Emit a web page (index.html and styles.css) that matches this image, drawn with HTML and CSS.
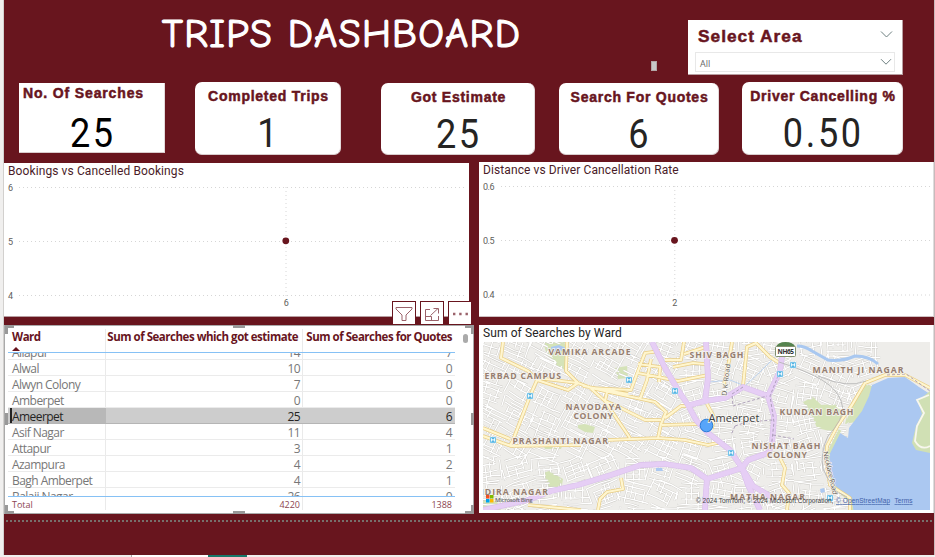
FILE: index.html
```html
<!DOCTYPE html>
<html lang="en">
<head>
<meta charset="utf-8">
<title>Trips Dashboard</title>
<link rel="stylesheet" href="styles.css">
</head>
<body>
<main class="canvas">
  <header class="top">
    <h1 class="title">TRIPS DASHBOARD</h1>
    <span class="handle-chip"></span>
    <section class="slicer">
      <div class="slicer-head"><span>Select Area</span>
        <svg width="13" height="9" viewBox="0 0 13 9"><path d="M1 1.5 L6.5 7 L12 1.5"/></svg></div>
      <div class="slicer-box"><span>All</span>
        <svg width="12" height="8" viewBox="0 0 12 8"><path d="M1 1.2 L6 6.2 L11 1.2"/></svg></div>
    </section>
  </header>

  <section class="kpis">
    <article class="kpi kpi-a"><h2>No. Of Searches</h2><p>25</p></article>
    <article class="kpi kpi-b"><h2>Completed Trips</h2><p>1</p></article>
    <article class="kpi kpi-c"><h2>Got Estimate</h2><p>25</p></article>
    <article class="kpi kpi-d"><h2>Search For Quotes</h2><p>6</p></article>
    <article class="kpi kpi-e"><h2>Driver Cancelling %</h2><p>0.50</p></article>
  </section>

  <section class="row charts">
    <article class="panel chart-left">
      <h3 class="t-book">Bookings vs Cancelled Bookings</h3>
      <svg class="plot" width="465" height="137" viewBox="4 179 465 137">
        <path class="grid" d="M19 187.5H464M19 241.5H464M19 295.5H464M286 187V296"/>
        <circle cx="285.8" cy="240.8" r="3.4"/>
        <text x="8" y="190.500">6</text><text x="8" y="244.500">5</text><text x="8" y="298.500">4</text>
        <text x="283.700" y="306.300">6</text>
      </svg>
    </article>
    <article class="panel chart-right">
      <h3 class="t-dist">Distance vs Driver Cancellation Rate</h3>
      <svg class="plot" width="454" height="138" viewBox="479 178 454 138">
        <path class="grid" d="M501 186.500H930M501 240.500H930M501 295H930M674.800 186V296"/>
        <circle cx="674.500" cy="240.300" r="3.4"/>
        <text x="483" y="189.500" textLength="11.500">0.6</text><text x="483" y="243.500" textLength="11.500">0.5</text><text x="483" y="298" textLength="11.500">0.4</text>
        <text x="672.200" y="306.300">2</text>
      </svg>
    </article>
  </section>

  <section class="row lower">
    <article class="panel table-panel">
      <div class="tools">
        <span><svg width="18" height="16" viewBox="0 0 18 16"><path d="M1 1.500H17V3L11 9V14.500H7V9L1 3Z"/></svg></span>
        <span><svg width="16" height="15" viewBox="0 0 16 15"><path d="M6 2.500H1.500V13.500H14.500V9M1.500 9.500H7.500V13.500M6.500 8.500L14 1.500M9.500 1.500H14.500V6.500"/></svg></span>
        <span><svg width="17" height="4" viewBox="0 0 17 4"><path class="dots" d="M1 .8h2.400v2.400H1zM7.200 .8h2.400v2.400H7.200zM13.500 .8h2.400v2.400h-2.400z"/></svg></span>
      </div>
      <i class="h tl"></i><i class="h tr"></i><i class="h bl"></i><i class="h br"></i>
      <i class="h tm"></i><i class="h bm"></i><i class="h ml"></i><i class="h mr"></i>
      <i class="thumb"></i>
      <div class="table">
        <div class="tr thead"><span>Ward<b class="sort"></b></span><span>Sum of Searches which got estimate</span><span>Sum of Searches for Quotes</span></div>
        <div class="tbody"><div class="rows">
          <div class="tr"><span>Allapur</span><span>14</span><span>7</span></div>
          <div class="tr"><span>Alwal</span><span>10</span><span>0</span></div>
          <div class="tr"><span>Alwyn Colony</span><span>7</span><span>0</span></div>
          <div class="tr"><span>Amberpet</span><span>0</span><span>0</span></div>
          <div class="tr selected"><span>Ameerpet</span><span>25</span><span>6</span></div>
          <div class="tr"><span>Asif Nagar</span><span>11</span><span>4</span></div>
          <div class="tr"><span>Attapur</span><span>3</span><span>1</span></div>
          <div class="tr"><span>Azampura</span><span>4</span><span>2</span></div>
          <div class="tr"><span>Bagh Amberpet</span><span>4</span><span>1</span></div>
          <div class="tr"><span>Balaji Nagar</span><span>26</span><span>0</span></div>
        </div></div>
        <div class="tr tfoot"><span>Total</span><span>4220</span><span>1388</span></div>
      </div>
    </article>

    <article class="panel map-panel">
      <h3 class="t-map">Sum of Searches by Ward</h3>
      <svg class="map" width="447" height="168" viewBox="0 0 447 168">
        <rect width="447" height="168" fill="#eeedea"/>
        <g class="green">
          <path d="M60 0H84V29L74 24L64 13Z"/><path d="M132 26l12-2 1 12-10 1z"/>
          <path d="M60 131l6-2 14 8-2 12-12-4z"/><path d="M0 157l14 3 4 8H0z"/>
          <path d="M320 60L330 55 338 63 352 62 360 71 351 90 334 86 330 76Z"/>
          <path d="M382 42L390 44 377 79 362 82 366 66Z"/>
          <path d="M60 102h20l-2 5H62z"/>
        </g>
        <g id="streets"></g>
        <g class="green"><path d="M95 83l7-1 10 3-2 6-8-1-7-4z"/><path d="M64 2H82V26L75 22L67 12Z"/><path d="M62 132l5-2 10 7-2 9-8-4z"/><path d="M322 60L331 56 339 64 352 63 359 71 351 89 335 85 331 76Z"/><path d="M383 43L390 44 377 79 363 81 368 66Z"/></g>
        <g class="river"><path d="M314 4Q322 4 329 9L345 18Q358 20 372 14Q386 14 395 22"/><path class="thin" d="M226 40L247 38 262 44 278 29 292 15"/></g>
        <path class="lake" d="M389 43L405 36 422 35 436 45 447 52V168H369L367 156 352 145 345 130 345 112 357 91 365 96 366 86 379 69 386 54Z"/>
        <path class="lake" d="M68 5l8-2 7 3v4l-8-2-6 3zM173 126h6l1 3h-7zM219 155l6-1v10l-5-4zM337 147l4-1 1 4-4 1z"/>
        <path class="isle" d="M447 49L435 59 439 72 433 84 429 101 433 108 447 111Z"/>
        <path class="isle-road" d="M446 53L434 58 441 71 434 84 432 99Q438 109 447 104"/>
        <path class="shore" d="M369 168L367 158 351 145 345 129V112L357 88"/>
        <g id="yellow"></g>
        <g id="purple"></g>
        <path class="dash" d="M260 45L249 52 250 64 284 54M252 84L264 80 290 78M297 29L287 54 291 80 288 108M252 84L248 93M290 93L311 97M404 33L423 32 447 49"/>
        <path class="rail" d="M296 20Q324 29 339 38Q358 49 360 67Q359 79 345 94Q337 110 340 127L351 148 364 155M335 34Q365 47 383 39"/>
        <g class="metro" id="metro"></g>
        <g class="place">
          <text x="65.500" y="13" textLength="82">VAMIKA ARCADE</text>
          <text x="1.500" y="36.500" textLength="76.500">ERBAD CAMPUS</text>
          <text x="82.500" y="67.500" textLength="55.500">NAVODAYA</text>
          <text x="90.500" y="76.500" textLength="39.500">COLONY</text>
          <text x="29.500" y="102" textLength="95.500">PRASHANTI NAGAR</text>
          <text x="-2" y="153" textLength="67">IDIRA NAGAR</text>
          <text x="206.500" y="16.200" textLength="54">SHIV BAGH</text>
          <text x="329.500" y="31" textLength="91">MANITH JI NAGAR</text>
          <text x="296.500" y="73" textLength="74">KUNDAN BAGH</text>
          <text x="268.500" y="107" textLength="69">NISHAT BAGH</text>
          <text x="284" y="116" textLength="40">COLONY</text>
          <text x="247" y="157.500" textLength="75">MATHA NAGAR</text>
        </g>
        <text class="street" transform="translate(243.500 54) rotate(-83)" textLength="32">D K Road</text>
        <text class="street" transform="translate(340 110) rotate(77)" textLength="44">Necklace Road</text>
        <path class="shield-top" d="M293 5Q295 0 302.500 0Q310 0 312.500 5Z"/>
        <rect class="shield" x="292.500" y="4.500" width="20" height="10" rx="1"/>
        <text class="nh" x="294.500" y="12" textLength="16.500">NH65</text>
        <circle class="pin" cx="223.500" cy="83.500" r="6.300"/>
        <text class="town" x="225.500" y="80" textLength="51">Ameerpet</text>
        <g class="ms"><path fill="#f25022" d="M3 153h3.500v3.500H3z"/><path fill="#7fba00" d="M7 153h3.500v3.500H7z"/><path fill="#00a4ef" d="M3 157h3.500v3.500H3z"/><path fill="#ffb900" d="M7 157h3.500v3.500H7z"/></g>
        <text class="bing" x="12" y="159.500" textLength="37.500">Microsoft Bing</text>
        <g class="credit"><text x="213" y="161" textLength="137.500">© 2024 TomTom, © 2024 Microsoft Corporation,</text>
        <text class="link" x="353" y="161" textLength="54">© OpenStreetMap</text><text class="link" x="411.500" y="161" textLength="18">Terms</text></g>
      </svg>
    </article>
  </section>
  <div class="page-edge"></div>
</main>
<footer class="tabs"><i class="tab-white"></i><i class="tab-green"></i></footer>
<script src="map.js"></script>
</body>
</html>
```
FILE: styles.css
```css
* { box-sizing: border-box; }
body { margin: 0; width: 935px; height: 557px; overflow: hidden; background: #f0efee; font-family: "Open Sans", sans-serif; }
h1, h2, h3, p { margin: 0; font-weight: 400; }
svg { display: block; }
.canvas { margin-left: 4px; width: 930px; height: 555px; background: #68151e; box-shadow: -1px 0 #d2d0ce, 1px 0 #c9b9bb; }
.top { display: flex; height: 82px; align-items: flex-start; }
.title { flex: none; margin: 7px 0 0 158px; width: 366px; height: 54px; line-height: 54px; white-space: nowrap; color: #fff; font-family: "Comic Sans MS", "Comic Neue", "Noto Sans", sans-serif; font-size: 40px; letter-spacing: 1.250px; -webkit-text-stroke: 1.200px #fff; }
.handle-chip { margin: 61px 0 0 123px; width: 6px; height: 10px; background: #c8c8c8; border: 1px solid #b3a6a7; }
.slicer { margin: 20px 0 0 31px; width: 215px; height: 55px; padding: 5px 7px 0; background: #fff; border-right: 1px solid #b89ea1; border-bottom: 1px solid #b89ea1; }
.slicer-head { display: flex; justify-content: space-between; padding: 0 2px 0 3px; height: 27px; color: #68151e; font: bold 17.300px/23px "Liberation Sans", sans-serif; letter-spacing: 1px; -webkit-text-stroke: .5px #68151e; }
.slicer-head svg { margin-top: 5px; }
.slicer svg path { fill: none; stroke: #6d7f80; stroke-width: 1; }
.slicer-box { display: flex; justify-content: space-between; width: 200px; height: 20px; padding: 0 2px 0 4px; border: 1px solid #e8e8e8; color: #666; font-size: 9px; line-height: 21px; }
.slicer-box svg { margin-top: 5px; }
.kpis { display: flex; height: 80px; padding-left: 15px; align-items: flex-start; }
.kpi { flex: none; height: 73px; background: #fff; border-radius: 7px; text-align: center; border-bottom: 1px solid #d9cccd; border-right: 1px solid #e3d9da; white-space: nowrap; }
.kpi h2 { height: 28px; padding: 5px 0 0 2px; color: #68151e; font: bold 14px/18px "Liberation Sans", sans-serif; letter-spacing: .740px; -webkit-text-stroke: .5px #68151e; }
.kpi p { color: #252423; font: 41px/47px Roboto, sans-serif; letter-spacing: 3px; padding-left: 3px; transform: scaleX(.88); }
.kpi-a { width: 146px; height: 70px; margin-top: 1px; border-radius: 0; }
.kpi-a h2 { text-align: left; padding: 1px 0 0 4px; height: 27px; letter-spacing: .850px; }
.kpi-a p { color: #000; }
.kpi-b { width: 146px; margin-left: 30px; }
.kpi-c { width: 154px; margin: 1px 0 0 40px; height: 72px; }
.kpi-d { width: 160px; margin: 1px 0 0 24px; height: 72px; }
.kpi-e { width: 161px; margin-left: 23px; }
.row { display: flex; justify-content: space-between; }
.panel { background: #fff; position: relative; }
.panel h3 { height: 16px; padding-left: 4px; white-space: nowrap; color: #252423; font: 12px/17px Roboto, sans-serif; letter-spacing: .1px; }
.charts { height: 155px; align-items: flex-end; }
.chart-left { width: 465px; height: 154px; border-bottom: 1px solid #b89ea1; }
.chart-right { width: 455px; height: 155px; border-bottom: 1px solid #cfc0c2; border-right: 1px solid #ddd; }
.plot .grid { fill: none; stroke: #d6d6d6; stroke-width: 1; stroke-dasharray: 1 3; }
.plot circle { fill: #68151e; }
.plot text { fill: #605e5c; font: 9px Roboto, sans-serif; }
.panel .t-book, .panel .t-dist { color: #4a1c28; }
.lower { margin-top: 8px; height: 189px; }
.table-panel { width: 470px; height: 189px; border: 1px solid #aaa; padding: 3px 0 0 3px; }
.tools { position: absolute; right: 1px; top: -25px; display: flex; gap: 4px; }
.tools span { width: 24px; height: 23px; background: #fff; border: 1px solid #68151e; border-bottom: 0; display: flex; align-items: center; justify-content: center; padding-top: 2px; }
.tools path { fill: none; stroke: #9a626a; stroke-width: 1; }
.tools .dots { fill: #9a626a; stroke: none; }
.h { position: absolute; border: 0 solid #999; z-index: 2; }
.tl, .tr.h, .bl, .br { width: 9px; height: 9px; }
.tl { left: 0; top: -1px; border-width: 3px 0 0 3px; }
.h.tr { right: -1px; top: -1px; border-width: 3px 3px 0 0; display: block; }
.bl { left: 0; bottom: -1px; border-width: 0 0 3px 3px; }
.br { right: -1px; bottom: -1px; border-width: 0 3px 3px 0; }
.tm, .bm { left: 228px; width: 12px; height: 3px; background: #999; }
.tm { top: -1px; } .bm { bottom: -1px; }
.ml, .mr { top: 87px; width: 3px; height: 12px; background: #999; }
.ml { left: 0; } .mr { right: -1px; }
.thumb { position: absolute; left: 458px; top: 8px; width: 5px; height: 9px; border-radius: 3px; background: #aaa; }
.table { width: 447px; height: 181px; display: flex; flex-direction: column; background: linear-gradient(#eaeaea, #eaeaea) 97px 0 / 1px 181px no-repeat, linear-gradient(#eaeaea, #eaeaea) 294px 0 / 1px 181px no-repeat; }
.table .tr { display: grid; grid-template-columns: 98px 197px 152px; }
.table .tr span { white-space: nowrap; text-align: right; padding-right: 3px; }
.table .tr span:first-child { text-align: left; padding-left: 4px; }
.table .thead { flex: none; height: 23px; color: #68151e; font: 700 11.500px/16px "Open Sans", sans-serif; letter-spacing: -.480px; }
.table .thead span:nth-child(2) { padding-right: 5px; }
.sort { display: block; width: 0; height: 0; margin-top: 2px; border: 4px solid transparent; border-top: 0; border-bottom: 4px solid #68151e; }
.tbody { flex: none; height: 145px; overflow: hidden; border-top: 1px solid #86c1f5; border-bottom: 1px solid #86c1f5; }
.rows { margin-top: -9px; }
.rows .tr { height: 16px; border-bottom: 1px solid #ebebeb; color: #777; font-size: 12px; line-height: 18px; letter-spacing: -.550px; }
.rows .tr span { height: 15px; }
.rows .selected { background: #cdcdcd; color: #252423; border-bottom-color: #b5b5b5; }
.rows .selected span:first-child { background: #b8b8b8; border-left: 2px solid #222; margin-left: 2px; padding-left: 0; }
.table .tfoot { color: #8c4650; font-size: 9px; line-height: 15px; }
.map-panel { width: 455px; height: 188px; border-right: 1px solid #ddd; }
.panel .t-map { height: 17px; line-height: 17px; }
.map { margin-left: 4px; font-family: "Open Sans", sans-serif; overflow: hidden; }
.green path { fill: #d5e3b8; }
.casing { fill: none; stroke: #c8c6c1; stroke-width: 2; }
.core { fill: none; stroke: #fff; stroke-width: 1.300; }
.y-case { fill: none; stroke: #e9cd84; stroke-width: 3.600; stroke-linejoin: round; }
.y-core { fill: none; stroke: #fff6cf; stroke-width: 2.200; stroke-linejoin: round; }
.p-case { fill: none; stroke: #d9c0ea; stroke-width: 5.800; stroke-linejoin: round; }
.p-core { fill: none; stroke: #e6cef5; stroke-width: 4.600; stroke-linejoin: round; }
.river path { fill: none; stroke: #a9c8f0; stroke-width: 3; }
.river .thin { stroke-width: .7; }
.lake { fill: #abc8f1; }
.isle { fill: #d0e0b4; }
.isle-road { fill: none; stroke: #f8f7ee; stroke-width: 1.800; }
.shore { fill: none; stroke: #d5e3b8; stroke-width: 3; }
.dash { fill: none; stroke: #a798b4; stroke-width: .9; stroke-dasharray: 3 2; }
.rail { fill: none; stroke: #b8b8b8; stroke-width: .9; }
.metro rect { fill: #54b5e3; stroke: #d3effc; stroke-width: .5; }
.metro path { fill: none; stroke: #fff; stroke-width: .9; }
.place text { fill: #967e70; stroke: #f5f3ef; stroke-width: 1.500; paint-order: stroke; font-size: 8.700px; font-weight: 700; }
.street { fill: #59524c; font-size: 7px; stroke: #f8f6f0; stroke-width: 1.200; paint-order: stroke; }
.shield-top { fill: #55834e; }
.shield { fill: #fff; stroke: #81906f; }
.nh { fill: #333; font-size: 6.500px; font-weight: 700; }
.pin { fill: #57a5fa; stroke: #297bd5; stroke-width: 1; }
.town { fill: #3c3c3c; stroke: #f8f6f2; stroke-width: 1.500; paint-order: stroke; font-size: 11px; }
.bing { fill: #6d6d6d; font-size: 6px; font-weight: 600; }
.credit text { fill: #444; font: 6.500px "Liberation Sans", sans-serif; }
.credit .link { fill: #3f60a8; text-decoration: underline; }
.page-edge { height: 2px; margin: 6px 1px 0 2px; background: repeating-linear-gradient(90deg, #77706c 0 2px, transparent 2px 4px); }
.tabs { display: flex; height: 2px; padding-left: 131px; }
.tab-white { width: 77px; background: #fff; border-left: 1px solid #aaa; }
.tab-green { width: 39px; background: #17786a; }
```
FILE: map.js
```js
const NS = "http://www.w3.org/2000/svg";
function path(parent, d, cls) {
  const p = document.createElementNS(NS, "path");
  p.setAttribute("d", d);
  p.setAttribute("class", cls);
  parent.appendChild(p);
}
// Side streets: short, gently rotated blocks that cover the built-up area.
let seed = 7;
function rnd() { seed = (seed * 16807) % 2147483647; return seed / 2147483647; }
let minor = "";
for (let cy = -8; cy < 176; cy += 25) {
  for (let cx = -8; cx < 375; cx += 29) {
    const ang = cx < 175 && cy < 105 ? 0.3 + rnd() * 0.25 : rnd() * 0.9 - 0.45;
    const c = Math.cos(ang), s = Math.sin(ang);
    const pt = (u, v) => (cx + 14 + u * c - v * s).toFixed(1) + " " + (cy + 12 + u * s + v * c).toFixed(1);
    for (let v = -13; v <= 13; v += 4 + rnd() * 3.5) {
      const a = -16 + rnd() * 9, b = 6 + rnd() * 10;
      minor += "M" + pt(a, v) + "L" + pt((a + b) / 2, v + rnd() * 2 - 1) + "L" + pt(b, v);
    }
    for (let u = -15; u <= 15; u += 4 + rnd() * 5) {
      const a = -14 + rnd() * 11, b = a + 7 + rnd() * 14;
      minor += "M" + pt(u, a) + "L" + pt(u + rnd() * 2 - 1, b);
    }
  }
}
const streets = document.getElementById("streets");
path(streets, minor, "casing");
path(streets, minor, "core");

const yellow = [
  "M20 0L18 16 45 29 54 38 47 54 30 98 27 104", "M84 0L83 29 95 41 108 46 148 48 155 29 162 11 177 9",
  "M54 38L85 48 95 41M54 36L95 41", "M0 86L27 97M0 94L28 104 98 103", "M125 98L175 96 202 98 225 103 239 100",
  "M105 44L122 59 132 74 147 96", "M108 46L172 60 183 70 178 82 175 96", "M124 50L122 59 138 66 162 78 178 78",
  "M182 76L198 64 203 64", "M155 31L195 39 225 33", "M168 17L164 38 157 57", "M182 18L198 18 201 0M201 12L223 5",
  "M179 83L217 82", "M115 168L117 157 124 150 140 147 138 136", "M45 163L98 168", "M249 0L246 19 241 42",
  "M273 1L264 5 260 44M272 0L287 15 298 22", "M297 116L302 126 299 143 306 151 304 168", "M224 62L231 75 229 87",
  "M100 44L145 52M155 22L177 25 176 40", "M190 25L210 21 221 22",
  "M447 46L422 33 402 33 382 41 369 63 355 83 344 104 343 119 347 143 367 156V168"
];
const purple = [
  "M169 0L182 26 195 48 205 63 213 78 225 91 247 108 259 126 265 143 277 168",
  "M223 0L225 36 222 59 203 64M222 59L242 56 260 45 285 54",
  "M300 7L297 29 285 54 291 74 289 103 285 111 265 118 259 126",
  "M0 168L45 158 68 149 95 143 128 133 158 123 182 122 208 126 224 137 259 126",
  "M224 137L223 150 222 168M259 126L270 144 292 157"
];
const yg = document.getElementById("yellow"), pg = document.getElementById("purple");
path(yg, yellow.join(""), "y-case");
path(yg, yellow.join(""), "y-core");
path(pg, purple.join(""), "p-case");
path(pg, purple.join(""), "p-core");

const mg = document.getElementById("metro");
[[47, 54], [10, 98], [146, 38], [192, 49], [297, 32], [310, 23], [248, 111], [347, 156]].forEach(([x, y]) => {
  const r = document.createElementNS(NS, "rect");
  r.setAttribute("x", x - 3); r.setAttribute("y", y - 3);
  r.setAttribute("width", 6); r.setAttribute("height", 6);
  mg.appendChild(r);
  path(mg, `M${x - 1.5} ${y + 1.5}v-3l1.500 2 1.500-2v3`, "m");
});
```
